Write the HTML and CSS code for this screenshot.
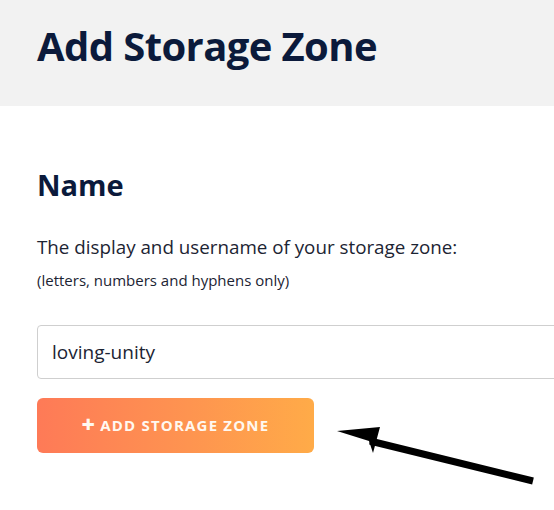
FILE: index.html
```html
<!DOCTYPE html>
<html lang="en">
<head>
<meta charset="utf-8">
<title>Add Storage Zone</title>
<link rel="stylesheet" href="styles.css">
</head>
<body>
<header class="page-header">
  <h1 class="page-title">Add Storage Zone</h1>
</header>
<main class="content">
  <h2 class="section-title">Name</h2>
  <p class="desc">The display and username of your storage zone:</p>
  <p class="hint">(letters, numbers and hyphens only)</p>
  <input class="text-input" type="text" value="loving-unity">
  <div class="actions">
    <button class="btn-add" type="button"><span class="plus">+</span> ADD STORAGE ZONE</button>
    <svg class="arrow" width="210" height="70" viewBox="0 0 210 70">
      <line x1="33" y1="22" x2="196" y2="62" stroke="#000" stroke-width="7"/>
      <polygon points="0,12 43,8 36,34 32,22" fill="#000"/>
    </svg>
  </div>
</main>
</body>
</html>
```
FILE: styles.css
```css
* { box-sizing: border-box; }
html, body { margin: 0; padding: 0; background: #fff; }
body {
  font-family: "Open Sans", "Noto Sans", sans-serif;
  color: #1c2433;
  width: 554px;
  height: 510px;
  overflow: hidden;
}
.page-header {
  background: #f2f2f2;
  height: 106px;
  padding: 18px 0 0 37px;
}
.page-title {
  margin: 0;
  font-size: 40px;
  font-weight: 700;
  line-height: 56px;
  color: #0b1a3b;
  letter-spacing: -0.6px;
}
.content {
  padding: 59px 0 0 37px;
}
.section-title {
  margin: 0;
  font-size: 29px;
  font-weight: 700;
  line-height: 40px;
  color: #0b1a3b;
}
.desc {
  margin: 29px 0 0;
  font-size: 18.8px;
  line-height: 26px;
  color: #1c2433;
}
.hint {
  margin: 10px 0 0;
  font-size: 15px;
  line-height: 20px;
  color: #1c2433;
}
.text-input {
  display: block;
  margin-top: 35px;
  width: 540px;
  height: 54px;
  border: 1px solid #cfcfcf;
  border-radius: 4px;
  padding: 0 14px;
  font-family: inherit;
  font-size: 19px;
  color: #1c2433;
  outline: none;
}
.actions {
  position: relative;
  margin-top: 19px;
}
.btn-add {
  display: block;
  width: 277px;
  height: 55px;
  border: none;
  border-radius: 6px;
  background: linear-gradient(90deg, #fe7a57 0%, #fe9450 55%, #ffab48 100%);
  color: #fff8f0;
  font-family: inherit;
  font-size: 15px;
  font-weight: 700;
  letter-spacing: 1.2px;
  padding: 0 0 2px;
  cursor: pointer;
}
.plus {
  font-size: 23px;
  font-weight: 800;
  line-height: 1;
  vertical-align: -2px;
  letter-spacing: 0;
}
.arrow {
  position: absolute;
  left: 300px;
  top: 21px;
}
```
